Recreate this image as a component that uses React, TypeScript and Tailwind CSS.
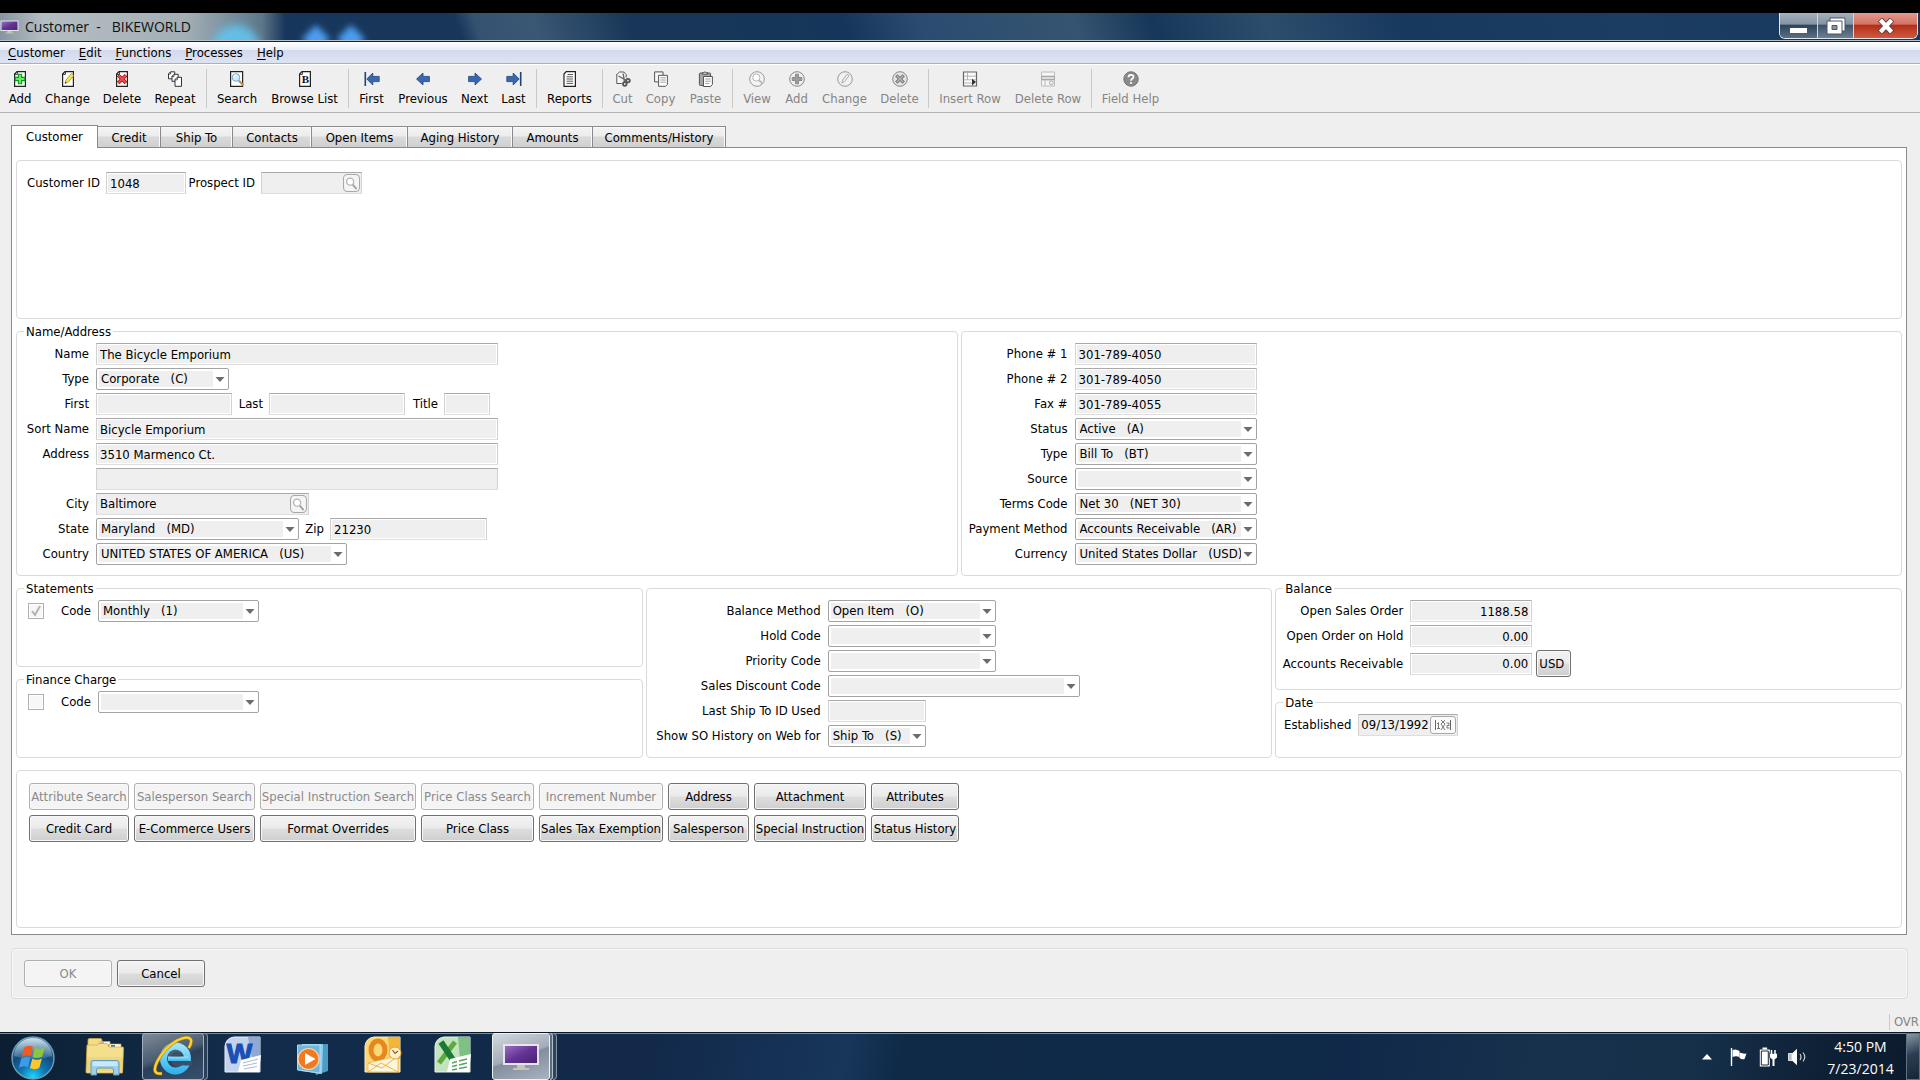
import type { ReactNode } from "react";

/* ---------- toolbar icons ---------- */

function Svg({ children, className = "size-4" }: { children: ReactNode; className?: string }) {
  return (
    <svg viewBox="0 0 16 16" className={className} fill="none" aria-hidden="true">
      {children}
    </svg>
  );
}

function Page({ stroke = "#222" }: { stroke?: string }) {
  return (
    <>
      <path d="M5 .6h8.4v14.8H2.6V3z" fill="#fff" stroke={stroke} strokeWidth="1.2" />
      <path d="M2.8 3.4H5.4V.8" stroke={stroke} strokeWidth=".9" />
    </>
  );
}

const AddIcon = () => (
  <Svg>
    <Page />
    <path d="M6.4 3.2h3.2v3.2h3.2v3.2H9.6v3.2H6.4V9.6H3.2V6.4h3.2z" fill="#5ff05f" stroke="#0a9a1a" strokeWidth="1.1" />
  </Svg>
);
const ChangeIcon = () => (
  <Svg>
    <Page />
    <path d="M5 12.5l1-3.5 5.5-6.5 2.3 1.9-5.4 6.6z" fill="#f7ea4e" stroke="#a08a20" strokeWidth=".8" />
    <path d="M5 12.5l.5-1.8 1.2 1z" fill="#333" />
  </Svg>
);
const DeleteIcon = () => (
  <Svg>
    <Page />
    <path d="M4.200 4.200l7.800 7.800M12 4.200L4.200 12" stroke="#a81010" strokeWidth="3.600" />
    <path d="M4.500 4.500l7.200 7.200M11.700 4.500l-7.200 7.200" stroke="#f25050" strokeWidth="1.800" />
  </Svg>
);
const RepeatIcon = () => (
  <Svg>
    <path d="M3.5.8h4.200v7H1.500V2.800z" fill="#fff" stroke="#333" />
    <path d="M7 3.300h4.200v7H5V5.300z" fill="#fff" stroke="#333" />
    <path d="M10.200 6.300h4.300v9H8V8.500z" fill="#fff" stroke="#333" />
    <path d="M8 8.800h2.400V6.300M5 5.600h2V3.500M1.600 3h2V1" stroke="#333" strokeWidth=".8" />
  </Svg>
);
const SearchIcon = () => (
  <Svg>
    <path d="M1.6.6h12v14.8h-12z" fill="#fff" stroke="#222" strokeWidth="1.2" />
    <path d="M9.8 9.8l4.700 4.300" stroke="#c98a4a" strokeWidth="2.200" />
    <circle cx="7" cy="6.500" r="3.800" fill="#cfeeff" stroke="#6fa6c8" />
    <path d="M4.800 5.800q.8-2 2.600-1.900" stroke="#fff" strokeWidth="1.200" />
  </Svg>
);
const BrowseIcon = () => (
  <Svg>
    <Page />
    <text x="8.300" y="12.400" fontSize="11" fontWeight="700" textAnchor="middle" fill="#111" fontFamily="Liberation Serif, serif">B</text>
  </Svg>
);
const blue = { fill: "#3a68ae", stroke: "#1e437e", strokeWidth: 0.8 };
const FirstIcon = () => (
  <Svg>
    <path d="M.5 1h1.600v14H.5z" fill="#1e437e" />
    <path d="M2.800 8l6-6v3.400h6.400v5.200H8.800V14z" {...blue} />
  </Svg>
);
const PrevIcon = () => (
  <Svg>
    <path d="M1.500 8l6.500-6v3.400h6.400v5.200H8V14z" {...blue} />
  </Svg>
);
const NextIcon = () => (
  <Svg>
    <path d="M14.500 8L8 2v3.400H1.600v5.200H8V14z" {...blue} />
  </Svg>
);
const LastIcon = () => (
  <Svg>
    <path d="M13.900 1h1.600v14h-1.600z" fill="#1e437e" />
    <path d="M13.200 8l-6-6v3.400H.8v5.200h6.400V14z" {...blue} />
  </Svg>
);
const ReportsIcon = () => (
  <Svg>
    <path d="M4.200.6h9.200v14.800H2V3z" fill="#fff" stroke="#222" strokeWidth="1.200" />
    <path d="M5.500 3.500H11M4.500 5.800H11M4.500 8H11M4.500 10.200H11M4.500 12.400H11" stroke="#444" strokeWidth=".9" />
  </Svg>
);
const CutIcon = () => (
  <Svg>
    <path d="M2.200 3.200L4.500 1h4.300l2.400 2.500v3M1.800 3v9.500h5" fill="#fafafa" stroke="#555" />
    <path d="M3.500 5l8 4.500M8.200 2.500l1.400 9" stroke="#666" strokeWidth="1.400" />
    <circle cx="13" cy="9.600" r="1.800" stroke="#555" strokeWidth="1.800" />
    <circle cx="9.800" cy="13" r="1.800" stroke="#555" strokeWidth="1.800" />
  </Svg>
);
const CopyIcon = () => (
  <Svg>
    <path d="M1.600.9h8.400v10H1.600z" fill="#f7f7f7" stroke="#555" />
    <path d="M5.600 4.300h8.800v9l-1.800 2H5.600z" fill="#fff" stroke="#555" />
    <path d="M7.300 6.800h5.500M7.300 9h5.500M7.300 11.200h5.500" stroke="#888" strokeWidth=".8" />
  </Svg>
);
const PasteIcon = () => (
  <Svg>
    <rect x="1.400" y="2" width="11.200" height="12.500" rx="1" fill="#a5a5a5" stroke="#555" />
    <path d="M4.500 3.200V1.700h1.300q1.200-1.900 2.400 0h1.300v1.500z" fill="#eee" stroke="#444" strokeWidth=".9" />
    <path d="M5.500 5.500h8.900v8l-1.800 2H5.500z" fill="#fff" stroke="#555" />
    <path d="M7.200 8h5.500M7.200 10.200h5.500M7.200 12.400h4" stroke="#888" strokeWidth=".8" />
  </Svg>
);
const ViewIcon = () => (
  <Svg>
    <circle cx="8" cy="8" r="7.300" fill="#f4f4f4" stroke="#999" />
    <circle cx="7.300" cy="6.500" r="3.600" fill="#fff" stroke="#b5b5b5" />
    <path d="M9.800 9l3.600 3.700" stroke="#bbb" strokeWidth="1.900" />
  </Svg>
);
const AddDimIcon = () => (
  <Svg>
    <circle cx="8" cy="8" r="7.300" fill="#eee" stroke="#888" />
    <path d="M6.500 3.200h3v3.300h3.300v3H9.500v3.300h-3V9.500H3.200v-3h3.300z" fill="#9d9d9d" stroke="#7c7c7c" strokeWidth=".8" />
  </Svg>
);
const ChangeDimIcon = () => (
  <Svg>
    <circle cx="8" cy="8" r="7.300" fill="#f0f0f0" stroke="#999" />
    <path d="M4.800 12l.7-2.800 4.700-6 1.900 1.500-4.700 6z" fill="#eee" stroke="#a5a5a5" strokeWidth=".9" />
  </Svg>
);
const DeleteDimIcon = () => (
  <Svg>
    <circle cx="8" cy="8" r="7.300" fill="#e4e4e4" stroke="#888" />
    <path d="M4.300 4.300l7.400 7.400M11.700 4.300l-7.400 7.400" stroke="#6f6f6f" strokeWidth="3.200" />
    <path d="M4.700 4.700l6.600 6.600M11.300 4.700l-6.600 6.600" stroke="#b5b5b5" strokeWidth="1.500" />
  </Svg>
);
const InsertRowIcon = () => (
  <Svg>
    <path d="M1.500 1h13v14h-13z" fill="#fafafa" stroke="#666" strokeWidth="1.200" />
    <path d="M2 5.200h12M2 8.800h12M5.500 1.500v7.500M2 12h8" stroke="#b5b5b5" />
    <path d="M10 7.800l4 3.300-4 3.300z" fill="#333" />
  </Svg>
);
const DeleteRowIcon = () => (
  <Svg>
    <path d="M1.500 1h13v14h-13z" fill="#f5f5f5" stroke="#bbb" />
    <path d="M2 5.200h12M2 9h12M5 9v5.500" stroke="#bbb" />
    <path d="M1.500 5.500h13v3h-13z" fill="#ddd" stroke="#999" strokeWidth=".8" />
    <circle cx="11.300" cy="11.800" r="1.900" stroke="#aaa" />
  </Svg>
);
const HelpIcon = () => (
  <Svg>
    <circle cx="8" cy="8" r="7.200" fill="#8a8a8a" stroke="#707070" />
    <path d="M5.400 6.200Q5.600 3.800 8 3.800t2.500 2Q10.500 7.200 8.900 8q-.9.500-.9 1.800" stroke="#fff" strokeWidth="1.700" />
    <circle cx="8" cy="12" r="1.100" fill="#fff" />
  </Svg>
);

type Tool = { label: string; icon: () => ReactNode; w: string; off?: boolean };
const toolGroups: Tool[][] = [
  [
    { label: "Add", icon: AddIcon, w: "w-[36px]" },
    { label: "Change", icon: ChangeIcon, w: "w-[59px]" },
    { label: "Delete", icon: DeleteIcon, w: "w-[50px]" },
    { label: "Repeat", icon: RepeatIcon, w: "w-[56px]" },
  ],
  [
    { label: "Search", icon: SearchIcon, w: "w-[54px]" },
    { label: "Browse List", icon: BrowseIcon, w: "w-[81px]" },
  ],
  [
    { label: "First", icon: FirstIcon, w: "w-[39px]" },
    { label: "Previous", icon: PrevIcon, w: "w-[64px]" },
    { label: "Next", icon: NextIcon, w: "w-[39px]" },
    { label: "Last", icon: LastIcon, w: "w-[39px]" },
  ],
  [{ label: "Reports", icon: ReportsIcon, w: "w-[59px]" }],
  [
    { label: "Cut", icon: CutIcon, w: "w-[33px]", off: true },
    { label: "Copy", icon: CopyIcon, w: "w-[43px]", off: true },
    { label: "Paste", icon: PasteIcon, w: "w-[47px]", off: true },
  ],
  [
    { label: "View", icon: ViewIcon, w: "w-[42px]", off: true },
    { label: "Add", icon: AddDimIcon, w: "w-[37px]", off: true },
    { label: "Change", icon: ChangeDimIcon, w: "w-[59px]", off: true },
    { label: "Delete", icon: DeleteDimIcon, w: "w-[51px]", off: true },
  ],
  [
    { label: "Insert Row", icon: InsertRowIcon, w: "w-[76px]", off: true },
    { label: "Delete Row", icon: DeleteRowIcon, w: "w-[80px]", off: true },
  ],
  [{ label: "Field Help", icon: HelpIcon, w: "w-[71px]", off: true }],
];

/* ---------- form parts ---------- */

function Group({ title, className = "", children }: { title?: string; className?: string; children?: ReactNode }) {
  return (
    <fieldset className={`relative min-w-0 rounded border border-[#dadada] ${className}`}>
      {title && <legend className="absolute -top-2 left-[7px] bg-white px-0.5 leading-4">{title}</legend>}
      {children}
    </fieldset>
  );
}

function Label({ id, children, className = "" }: { id: string; children: ReactNode; className?: string }) {
  return (
    <label htmlFor={id} className={`text-right whitespace-nowrap ${className}`}>
      {children}
    </label>
  );
}

const fieldBox = "h-[22px] border border-t-[#a9a9a9] border-x-[#d2d2d2] border-b-[#dedede] bg-[#efefef]";

function Field({ id, value = "", className = "" }: { id: string; value?: string; className?: string }) {
  return (
    <input
      id={id}
      type="text"
      readOnly
      value={value}
      className={`${fieldBox} px-[3px] ring-1 ring-white ring-inset outline-none ${className}`}
    />
  );
}

function LookupField({ id, value = "", name, className = "" }: { id: string; value?: string; name: string; className?: string }) {
  return (
    <div className={`${fieldBox} flex items-center pr-px ${className}`}>
      <input id={id} type="text" readOnly value={value} className="min-w-0 flex-1 px-[3px] outline-none" />
      <button type="button" aria-label={name} className="flex h-[18px] w-[17px] items-center justify-center rounded-sm border border-[#a8a8a8] bg-[#f4f4f4]">
        <svg viewBox="0 0 14 16" className="h-[15px] w-[13px]" fill="none" aria-hidden="true">
          <circle cx="5.500" cy="6" r="3.800" fill="#fff" stroke="#b4b4b4" strokeWidth="1.400" />
          <path d="M8.300 9.200l4.200 4.800" stroke="#a0a0a0" strokeWidth="2" />
        </svg>
      </button>
    </div>
  );
}

function Drop({ id, value = "", className = "" }: { id: string; value?: string; className?: string }) {
  return (
    <div className={`flex h-[22px] rounded-[2px] border border-[#a3a3a3] bg-white p-0.5 ${className}`}>
      <select id={id} className="min-w-0 flex-1 appearance-none bg-[#efefef] pl-0.5 text-clip outline-none">
        <option>{value.replace(/ {2,}/g, "\u00a0\u00a0\u00a0")}</option>
      </select>
      <svg viewBox="0 0 13 16" className="pointer-events-none h-4 w-[13px] shrink-0" aria-hidden="true">
        <path d="M2.500 6h9L7 11z" fill="#6c6c6c" />
      </svg>
    </div>
  );
}

function PushButton({ children, off, className = "" }: { children: ReactNode; off?: boolean; className?: string }) {
  return (
    <button
      type="button"
      disabled={off}
      className={`flex h-[27px] items-center justify-center rounded-[3px] border whitespace-nowrap ring-1 ring-inset ${
        off
          ? "border-[#b0b0b0] bg-[#f4f4f4] text-[#8a8a8a] ring-[#fafafa]"
          : "border-[#707070] bg-[linear-gradient(#f3f3f3_0%,#ebebeb_48%,#dddddd_52%,#cfcfcf_100%)] ring-[#f8f8f8]"
      } ${className}`}
    >
      {children}
    </button>
  );
}

const menus = ["Customer", "Edit", "Functions", "Processes", "Help"];

const tabs = [
  { label: "Credit", w: "w-[63px]" },
  { label: "Ship To", w: "w-[72px]" },
  { label: "Contacts", w: "w-[79px]" },
  { label: "Open Items", w: "w-[96px]" },
  { label: "Aging History", w: "w-[105px]" },
  { label: "Amounts", w: "w-[80px]" },
  { label: "Comments/History", w: "w-[133px]" },
];

const actions: { label: string; off?: boolean }[] = [
  { label: "Attribute Search", off: true },
  { label: "Salesperson Search", off: true },
  { label: "Special Instruction Search", off: true },
  { label: "Price Class Search", off: true },
  { label: "Increment Number", off: true },
  { label: "Address" },
  { label: "Attachment" },
  { label: "Attributes" },
  { label: "Credit Card" },
  { label: "E-Commerce Users" },
  { label: "Format Overrides" },
  { label: "Price Class" },
  { label: "Sales Tax Exemption" },
  { label: "Salesperson" },
  { label: "Special Instruction" },
  { label: "Status History" },
];

const contact: { id: string; label: string; value: string; drop?: boolean }[] = [
  { id: "phone1", label: "Phone # 1", value: "301-789-4050" },
  { id: "phone2", label: "Phone # 2", value: "301-789-4050" },
  { id: "fax", label: "Fax #", value: "301-789-4055" },
  { id: "status", label: "Status", value: "Active   (A)", drop: true },
  { id: "billtype", label: "Type", value: "Bill To   (BT)", drop: true },
  { id: "source", label: "Source", value: "", drop: true },
  { id: "terms", label: "Terms Code", value: "Net 30   (NET 30)", drop: true },
  { id: "payment", label: "Payment Method", value: "Accounts Receivable   (AR)", drop: true },
  { id: "currency", label: "Currency", value: "United States Dollar   (USD)", drop: true },
];

/* ---------- taskbar icons ---------- */

function StartOrb() {
  return (
    <svg viewBox="0 0 44 44" className="size-11" aria-hidden="true">
      <defs>
        <radialGradient id="orb" cx="50%" cy="95%" r="85%">
          <stop offset="0" stopColor="#1fd6ff" />
          <stop offset=".35" stopColor="#0f78b4" />
          <stop offset=".7" stopColor="#134a7c" />
          <stop offset="1" stopColor="#4a7898" />
        </radialGradient>
        <linearGradient id="orbShine" x2="0" y2="1">
          <stop offset="0" stopColor="#dcecf4" stopOpacity=".9" />
          <stop offset="1" stopColor="#8fb6cc" stopOpacity=".25" />
        </linearGradient>
      </defs>
      <circle cx="22" cy="22" r="21" fill="url(#orb)" stroke="#6f9db8" strokeWidth="1.400" />
      <path d="M3 20a19 18 0 0138 0q-19 6-38 0z" fill="url(#orbShine)" />
      <path d="M13 11.500q4.500-3 9-.6l-2.200 9.300q-4.500-2.200-9 .6z" fill="#ee5a24" />
      <path d="M23.800 11.700q4.700 2.300 10-.5l-2.500 9.300q-5 2.600-9.700.4z" fill="#8cc63e" />
      <path d="M10.200 22.500q4.500-2.800 9-.4L17 31.300q-4.500-2.300-9 .5z" fill="#3f9be8" />
      <path d="M21.200 22.800q4.700 2.300 9.700-.4l-2.500 9.300q-5 2.800-9.500.4z" fill="#fcc62d" />
    </svg>
  );
}

function FolderIcon() {
  return (
    <svg viewBox="0 0 40 40" className="size-10" aria-hidden="true">
      <path d="M3 3q0-1.500 1.500-1.500h11q1.500 0 1.500 2V9H3z" fill="#f3dc86" stroke="#c9a94c" strokeWidth=".8" />
      <path d="M14 4.500h11V8H14zM24 7h12v4H24z" fill="#fffbe8" stroke="#c9a94c" strokeWidth=".6" />
      <path d="M15 5.500h4v2h-4z" fill="#d9482e" />
      <path d="M26 8h4v2h-4z" fill="#3a7ec2" />
      <path d="M2 8h10l2-1.500h8L24 10h13.500q1 0 1 1.200L37.500 36H2q-1 0-1-1z" fill="#f4df8d" stroke="#cfb055" strokeWidth=".8" />
      <path d="M2 20h36v14H2z" fill="#e9cc66" opacity=".45" />
      <path d="M6 25.500q0-2 2-2h24q2 0 2 2V38h-5.500v-5q0-2-2-2h-13q-2 0-2 2v5H6z" fill="#9fcfe8" stroke="#5f9cc4" />
      <path d="M7.500 25.500q0-1 1-1h23q1 0 1 1v3.500h-25z" fill="#d5edf8" opacity=".8" />
    </svg>
  );
}

function BrowserIcon() {
  return (
    <svg viewBox="0 0 40 42" className="h-[42px] w-10" fill="none" aria-hidden="true">
      <defs>
        <linearGradient id="eFill" x2="0" y2="1">
          <stop offset="0" stopColor="#9be4fb" />
          <stop offset="1" stopColor="#34b4ee" />
        </linearGradient>
      </defs>
      <ellipse cx="22.500" cy="22.500" rx="12" ry="12.500" stroke="url(#eFill)" strokeWidth="7" />
      <path d="M15 20.500h20.500v4.500H15z" fill="url(#eFill)" />
      <path d="M26 25h13v4.500h-9z" fill="#3a5068" />
      <path d="M18.500 20.300q.8-4.300 4.300-4.300t4.300 4.300zM18.500 25h8l3.500 4q-3 2-6 1.500-4.500-.7-5.500-5.500z" fill="#3a5068" />
      <path d="M9 37.500Q-2 39 4 26 11 12 24 4.500 36-1 38 4q.8 3-2.200 8" stroke="#b88710" strokeWidth="3.400" />
      <path d="M9 37.500Q-2 39 4 26 11 12 24 4.500 36-1 38 4q.8 3-2.200 8" stroke="#fbd231" strokeWidth="2.200" />
    </svg>
  );
}

function WordIcon() {
  return (
    <svg viewBox="0 0 38 38" className="size-[38px]" fill="none" aria-hidden="true">
      <path d="M10 1h26v35H1V10Q2 2 10 1z" fill="#c3d3ee" stroke="#eaf1fb" />
      <path d="M24 1h12v22H28z" fill="#8fa8d6" />
      <text x="15.500" y="27" fontSize="27" fontWeight="700" textAnchor="middle" fill="#1a50b4" stroke="#1a50b4" strokeWidth="1.200" fontFamily="Liberation Sans, sans-serif">W</text>
      <path d="M17 24l20-5-2 17H14z" fill="#fff" />
      <path d="M19 27l15-4M19 30l14-3M20 33l13-2.500" stroke="#aab9d8" />
    </svg>
  );
}

function MediaIcon() {
  return (
    <svg viewBox="0 0 34 34" className="size-[34px]" aria-hidden="true">
      <path d="M9 3l23-1v27L20 33z" fill="#4b9cc7" />
      <path d="M6 2h21l-1 30L5 29z" fill="#8fd0ee" />
      <path d="M1.500 3H24v28L1.500 28z" fill="#6fb8dc" stroke="#a9dcf2" />
      <circle cx="12.500" cy="17" r="10.500" fill="#f07a22" stroke="#ffd2a8" strokeWidth="1.200" />
      <path d="M9 11l10.500 6L9 23z" fill="#fff" />
    </svg>
  );
}

function MailIcon() {
  return (
    <svg viewBox="0 0 38 38" className="size-[38px]" fill="none" aria-hidden="true">
      <path d="M10 1h26v35H1V10Q2 2 10 1z" fill="#fbd877" stroke="#fff0c0" />
      <path d="M24 1h12v22H26z" fill="#f4b63a" />
      <ellipse cx="14" cy="14" rx="7" ry="9" stroke="#e8871c" strokeWidth="5" />
      <path d="M4 27l30-7v16H4z" fill="#fdf6de" stroke="#eab54a" strokeWidth=".8" />
      <path d="M4 36l13-9 17 9M4 27l14 5 16-12" stroke="#eab54a" />
      <circle cx="31" cy="17" r="6" fill="#fdf1cf" stroke="#e8a22e" />
      <path d="M28.500 14l2.500 3.500 3-2.500" stroke="#8a5a10" strokeWidth="1.200" />
    </svg>
  );
}

function SheetIcon() {
  return (
    <svg viewBox="0 0 38 38" className="size-[38px]" fill="none" aria-hidden="true">
      <path d="M10 1h26v35H1V10Q2 2 10 1z" fill="#c2e3bd" stroke="#e9f6e6" />
      <path d="M24 1h12v22H26z" fill="#7fc184" />
      <path d="M5 27L21 6" stroke="#5cab3c" strokeWidth="5" />
      <path d="M7 6l14 21" stroke="#1c7a36" strokeWidth="6" />
      <path d="M16 23l21-5-2 18H13z" fill="#fff" />
      <path d="M18 27l5-1.500M25 25l8-2M18 30.500l5-1.200M25 29l8-2M18 34l5-1M25 32.500l8-1.500" stroke="#5aa563" strokeWidth="1.500" />
    </svg>
  );
}

function MonitorIcon({ className }: { className: string }) {
  return (
    <svg viewBox="0 0 38 28" className={className} aria-hidden="true">
      <defs>
        <linearGradient id="screen" x2="1" y2="1">
          <stop offset="0" stopColor="#9a6ec0" />
          <stop offset=".5" stopColor="#643494" />
          <stop offset="1" stopColor="#4a2372" />
        </linearGradient>
      </defs>
      <path d="M15 22h8v3h4v2H11v-2h4z" fill="#c9c5b6" />
      <path d="M1 1h36v21H1z" fill="#e5e5ea" />
      <path d="M3 3h32v17H3z" fill="url(#screen)" />
    </svg>
  );
}

export default function App() {
  return (
    <div className="flex min-h-screen flex-col bg-[#efefef] font-['DejaVu_Sans_Condensed','DejaVu_Sans',sans-serif] text-[13px] leading-4 text-black">
      <div className="h-[13px] bg-black" />

      <header className="relative flex h-[29px] items-center overflow-hidden border-b border-[#0f2438] bg-[linear-gradient(70deg,#17375e_0%,#17365a_24%,#355371_25%,#3a5874_28%,#183658_33%,#15365a_44%,#2b4c70_48%,#355471_56%,#17375a_60%,#2d4d6c_66%,#17395e_73%,#1c3d62_85%,#17375c_100%)]">
        <div className="absolute inset-y-0 left-0 w-[285px] bg-[linear-gradient(90deg,#8595a0_0%,#b4bdc2_15%,#a4afb5_65%,#6d8799_85%,#5d7588_92%,transparent_100%)]" />
        <div className="absolute top-3 left-[212px] h-6 w-[48px] rounded-t-full bg-[#62c4ee] opacity-90 blur-[4px]" />
        <div className="absolute top-4 left-[306px] h-5 w-5 rotate-45 bg-[#4b9cf0] blur-[3px]" />
        <div className="absolute top-4 left-[341px] h-5 w-5 rotate-45 bg-[#4b9cf0] blur-[3px]" />
        <div className="absolute inset-x-0 bottom-0 h-px bg-[#b4c0cb]" />
        <MonitorIcon className="relative h-[14px] w-[19px]" />
        <h1 className="relative ml-[6px] font-['Open_Sans','Noto_Sans',sans-serif] text-sm whitespace-pre text-[#0c1013]">{"Customer  -   BIKEWORLD"}</h1>
        <div className="relative mr-[2px] ml-auto flex h-[26px] self-start overflow-hidden rounded-b-md border border-t-0 border-[#dfe6ec]">
          <button type="button" aria-label="Minimize" className="flex w-[38px] items-end justify-center border-r border-[#cdd6de] bg-[linear-gradient(#a5b2bd_0%,#8494a3_45%,#2c4258_48%,#5b7084_100%)] pb-[5px]">
            <span className="h-[5px] w-[17px] bg-white" />
          </button>
          <button type="button" aria-label="Restore" className="flex w-[36px] items-center justify-center border-r border-[#cdd6de] bg-[linear-gradient(#a5b2bd_0%,#8494a3_45%,#3c5268_48%,#6b8094_100%)]">
            <svg viewBox="0 0 20 18" className="h-[18px] w-5" aria-hidden="true">
              <path d="M4 1h15v13H4z" fill="#fff" stroke="#4a5866" />
              <path d="M1 4h15v13H1z" fill="#fff" stroke="#4a5866" />
              <path d="M6 8.500h5v4H6z" fill="#8494a3" stroke="#4a5866" />
            </svg>
          </button>
          <button type="button" aria-label="Close" className="flex w-[63px] items-center justify-center bg-[linear-gradient(#e39a8e_0%,#d47263_45%,#b22d18_48%,#cf5a3f_100%)]">
            <svg viewBox="0 0 18 16" className="h-4 w-[18px]" fill="none" aria-hidden="true">
              <path d="M3 1.500L15 14.500M15 1.500L3 14.500" stroke="#5a3a3a" strokeWidth="6" />
              <path d="M3.400 2L14.600 14M14.600 2L3.400 14" stroke="#fff" strokeWidth="4.200" />
            </svg>
          </button>
        </div>
      </header>

      <nav className="flex h-[22px] items-center gap-[14px] border-b border-[#a7b0c8] bg-[linear-gradient(#ffffff_0%,#e9eef7_36%,#d3daec_38%,#dee3f3_100%)] pl-2">
        {menus.map((m) => (
          <button key={m} type="button">
            <span className="underline underline-offset-2">{m[0]}</span>
            {m.slice(1)}
          </button>
        ))}
      </nav>

      <div role="toolbar" aria-label="Record tools" className="flex h-[49px] border-t border-b border-t-white border-b-[#b3b3b3] pl-0.5">
        {toolGroups.map((g, i) => (
          <div key={i} className="flex">
            {i > 0 && <span className="mx-[3px] mt-1 h-[39px] w-px bg-[#c9c9c9]" />}
            {g.map((t) => (
              <button
                key={t.label}
                type="button"
                disabled={t.off}
                className={`flex flex-col items-center gap-1 pt-1.5 whitespace-nowrap ${t.w} ${t.off ? "text-[#858585]" : "text-black"}`}
              >
                <t.icon />
                <span>{t.label}</span>
              </button>
            ))}
          </div>
        ))}
      </div>

      <main className="mr-[13px] ml-[11px] flex flex-1 flex-col pt-3">
        <div role="tablist" className="flex h-[22px] items-end">
          <button type="button" role="tab" aria-selected="true" className="relative z-10 -mb-px h-[23px] w-[87px] border border-b-0 border-[#8a8a8e] bg-white">
            Customer
          </button>
          {tabs.map((t) => (
            <button
              key={t.label}
              type="button"
              role="tab"
              aria-selected="false"
              className={`h-[21px] border-t border-r border-[#8a8a8e] bg-[linear-gradient(#f4f4f4_0%,#ececec_45%,#dadada_50%,#d0d0d0_100%)] pt-0.5 whitespace-nowrap shadow-[inset_-1px_1px_0_#fafafa] ${t.w}`}
            >
              {t.label}
            </button>
          ))}
        </div>

        <section className="flex flex-1 flex-col gap-3 border border-[#8a8a8e] bg-white px-1 pt-3 pb-1.5">
          <Group className="min-h-[159px] pt-[11px] pl-2.5">
            <div className="flex items-center">
              <Label id="cust" className="w-[72px]">Customer ID</Label>
              <Field id="cust" value="1048" className="ml-[7px] w-[80px]" />
              <Label id="prospect" className="ml-[2px] w-[67px]">Prospect ID</Label>
              <LookupField id="prospect" name="Find prospect" className="ml-[6px] w-[101px]" />
            </div>
          </Group>

          <div className="grid grid-cols-2 gap-[3px]">
            <Group title="Name/Address" className="pt-[11px] pb-2.5">
              <div className="grid grid-cols-[72px_auto] items-center justify-start gap-x-[7px] gap-y-[3px]">
                <Label id="name">Name</Label>
                <Field id="name" value="The Bicycle Emporium" className="w-[402px]" />
                <Label id="type">Type</Label>
                <Drop id="type" value="Corporate   (C)" className="w-[133px]" />
                <Label id="first">First</Label>
                <div className="flex items-center">
                  <Field id="first" className="w-[136px]" />
                  <Label id="last" className="w-[31px]">Last</Label>
                  <Field id="last" className="ml-1.5 w-[136px]" />
                  <Label id="title" className="w-[33px]">Title</Label>
                  <Field id="title" className="ml-1.5 w-[46px]" />
                </div>
                <Label id="sort">Sort Name</Label>
                <Field id="sort" value="Bicycle Emporium" className="w-[402px]" />
                <Label id="addr1">Address</Label>
                <Field id="addr1" value="3510 Marmenco Ct." className="w-[402px]" />
                <span />
                <input type="text" readOnly aria-label="Address line 2" className={`${fieldBox} w-[402px] outline-none`} />
                <Label id="city">City</Label>
                <LookupField id="city" value="Baltimore" name="Find city" className="w-[213px]" />
                <Label id="state">State</Label>
                <div className="flex items-center">
                  <Drop id="state" value="Maryland   (MD)" className="w-[203px]" />
                  <Label id="zip" className="w-[25px]">Zip</Label>
                  <Field id="zip" value="21230" className="ml-1.5 w-[157px]" />
                </div>
                <Label id="country">Country</Label>
                <Drop id="country" value="UNITED STATES OF AMERICA   (US)" className="w-[251px]" />
              </div>
            </Group>

            <Group className="pt-[11px] pb-2.5">
              <div className="grid grid-cols-[106px_182px] items-center gap-x-[7px] gap-y-[3px]">
                {contact.map((c) => (
                  <div key={c.id} className="contents">
                    <Label id={c.id}>{c.label}</Label>
                    {c.drop ? <Drop id={c.id} value={c.value} /> : <Field id={c.id} value={c.value} />}
                  </div>
                ))}
              </div>
            </Group>
          </div>

          <div className="grid grid-cols-3 gap-[3px]">
            <div className="flex flex-col gap-3">
              <Group title="Statements" className="flex-1 pt-[11px] pl-[11px]">
                <div className="flex items-center">
                  <input type="checkbox" defaultChecked disabled aria-label="Send statements" className="size-4 appearance-none border border-[#b0b0b0] bg-[#f7f7f7] shadow-[inset_0_0_0_1px_#fff]" />
                  <svg viewBox="0 0 16 16" className="pointer-events-none -ml-4 size-4" fill="none" aria-hidden="true">
                    <path d="M4 8l3 4 5-9" stroke="#b4b4b4" strokeWidth="2" />
                  </svg>
                  <Label id="stmt" className="ml-[17px] w-[30px]">Code</Label>
                  <Drop id="stmt" value="Monthly   (1)" className="ml-[7px] w-[161px]" />
                </div>
              </Group>
              <Group title="Finance Charge" className="flex-1 pt-[11px] pl-[11px]">
                <div className="flex items-center">
                  <input type="checkbox" disabled aria-label="Apply finance charge" className="size-4 appearance-none border border-[#b0b0b0] bg-[#f7f7f7] shadow-[inset_0_0_0_1px_#fff]" />
                  <Label id="fin" className="ml-[17px] w-[30px]">Code</Label>
                  <Drop id="fin" className="ml-[7px] w-[161px]" />
                </div>
              </Group>
            </div>

            <Group className="pt-[11px] pb-2.5">
              <div className="grid grid-cols-[174px_auto] items-center justify-start gap-x-[7px] gap-y-[3px]">
                <Label id="balm">Balance Method</Label>
                <Drop id="balm" value="Open Item   (O)" className="w-[168px]" />
                <Label id="hold">Hold Code</Label>
                <Drop id="hold" className="w-[168px]" />
                <Label id="prio">Priority Code</Label>
                <Drop id="prio" className="w-[168px]" />
                <Label id="disc">Sales Discount Code</Label>
                <Drop id="disc" className="w-[252px]" />
                <Label id="lastship">Last Ship To ID Used</Label>
                <Field id="lastship" className="w-[98px]" />
                <Label id="sohist">Show SO History on Web for</Label>
                <Drop id="sohist" value="Ship To   (S)" className="w-[98px]" />
              </div>
            </Group>

            <div className="flex flex-col gap-3">
              <Group title="Balance" className="pt-[11px] pb-3">
                <div className="grid grid-cols-[127px_auto] items-center justify-start gap-x-[7px] gap-y-[3px]">
                  <Label id="oso">Open Sales Order</Label>
                  <Field id="oso" value="1188.58" className="w-[122px] text-right" />
                  <Label id="ooh">Open Order on Hold</Label>
                  <Field id="ooh" value="0.00" className="w-[122px] text-right" />
                  <Label id="ar">Accounts Receivable</Label>
                  <div className="flex items-center gap-1">
                    <Field id="ar" value="0.00" className="w-[122px] text-right" />
                    <PushButton className="w-[35px] pr-1">USD</PushButton>
                  </div>
                </div>
              </Group>
              <Group title="Date" className="flex-1 pt-[11px]">
                <div className="flex items-center">
                  <Label id="est" className="w-[75px]">Established</Label>
                  <div className={`${fieldBox} ml-[7px] flex w-[100px] items-center pr-px`}>
                    <input id="est" type="text" readOnly value="09/13/1992" className="min-w-0 flex-1 pl-0.5 outline-none" />
                    <button type="button" aria-label="Choose date" className="flex h-[18px] w-[26px] items-center justify-center rounded-[3px] border border-[#a8a8a8] bg-[#fafafa]">
                      <svg viewBox="0 0 18 12" className="h-3 w-[18px]" fill="none" aria-hidden="true">
                        <path d="M1.500 1v10M16.500 1v10" stroke="#666" />
                        <path d="M7 1l4 4-4 6M11 1L7 5l4 6" stroke="#777" />
                        <path d="M3 5l1.500-1.500V9M3 9.500h3M12.500 4H15v2.500h-2V9h2.500" stroke="#777" />
                      </svg>
                    </button>
                  </div>
                </div>
              </Group>
            </div>
          </div>

          <Group className="flex-1 pt-3 pl-3">
            <div className="grid grid-cols-[100px_121px_156px_113px_124px_81px_112px_88px] gap-[5px]">
              {actions.map((a) => (
                <PushButton key={a.label} off={a.off}>
                  {a.label}
                </PushButton>
              ))}
            </div>
          </Group>
        </section>
      </main>

      <div className="mt-[13px] mr-3 ml-[11px] flex gap-[5px] rounded border border-[#dadcdc] py-[11px] pl-3 shadow-[inset_0_0_0_1px_#f8f8f8]">
        <PushButton off className="w-[88px]">OK</PushButton>
        <PushButton className="w-[88px]">Cancel</PushButton>
      </div>

      <div className="flex h-[33px] items-end justify-end pb-[2px] text-[#858585]">
        <span className="border-l border-[#c8c8c8] pr-px pl-1">OVR</span>
      </div>

      <footer className="flex h-12 items-stretch border-t border-[#0a1826] bg-[linear-gradient(100deg,#0b1e32_0%,#0d2339_3%,#122c4a_12%,#12294a_34%,#17365a_44%,#0f2a47_47%,#10294a_70%,#17304c_80%,#16304a_88%,#0e2035_95%,#0c1a2c_100%)] pl-[11px] font-['Open_Sans','Noto_Sans',sans-serif] text-white shadow-[inset_0_1px_0_#7d8b99]">
        <button type="button" aria-label="Start" className="mr-[14px] flex w-11 items-center pt-0.5">
          <StartOrb />
        </button>
        <button type="button" aria-label="Explorer" className="flex w-[72px] items-center justify-center"><FolderIcon /></button>
        <div className="flex w-[67px] pl-px">
          <button type="button" aria-label="Browser" className="flex w-[62px] items-center justify-center rounded-[3px] border border-[#a4b1bd] bg-[linear-gradient(160deg,#7e8a98,#4a5d72_45%,#2b4058_55%,#35506e)]"><BrowserIcon /></button>
          <span className="w-1 rounded-r border border-l-0 border-[#7f90a0] bg-[#2b4058]" />
        </div>
        <button type="button" aria-label="Word processor" className="flex w-[70px] items-center justify-center pb-1"><WordIcon /></button>
        <button type="button" aria-label="Media player" className="flex w-[70px] items-center justify-center pt-1"><MediaIcon /></button>
        <button type="button" aria-label="Mail" className="flex w-[70px] items-center justify-center pb-1"><MailIcon /></button>
        <button type="button" aria-label="Spreadsheet" className="flex w-[70px] items-center justify-center pb-1"><SheetIcon /></button>
        <div className="flex pl-1">
          <button type="button" aria-label="Customer window" className="flex w-[58px] items-center justify-center rounded-[3px] border border-[#eef1f4] bg-[linear-gradient(160deg,#d3d8de,#a4acb8_48%,#828e9e_52%,#a9b3c0)]"><MonitorIcon className="h-7 w-[38px]" /></button>
          <span className="w-[3px] rounded-r border border-l-0 border-[#b5bfc9] bg-[#5b6c7e]" />
          <span className="w-1 rounded-r border border-l-0 border-[#8493a2] bg-[#2f445a]" />
        </div>

        <div className="ml-auto flex items-center">
          <button type="button" aria-label="Show hidden icons" className="mr-[18px]">
            <svg viewBox="0 0 10 6" className="h-1.5 w-2.5" aria-hidden="true"><path d="M5 0l5 5.500H0z" fill="#fff" /></svg>
          </button>
          <button type="button" aria-label="Action center" className="mr-[11px]">
            <svg viewBox="0 0 18 18" className="size-[18px]" fill="none" aria-hidden="true">
              <path d="M1.500 0v18" stroke="#fff" strokeWidth="1.400" />
              <path d="M2.500 2Q6 .5 9.500 3v6Q6 7.500 2.500 9z" fill="#fff" />
              <path d="M9.500 4.500q3.500 1.500 7 1L14.500 11q-2.500 1-5-1z" fill="#fff" />
            </svg>
          </button>
          <button type="button" aria-label="Power" className="mr-[11px]">
            <svg viewBox="0 0 18 20" className="h-5 w-[18px]" fill="none" aria-hidden="true">
              <path d="M.8 2.500h10v17h-10z" fill="#fff" />
              <path d="M2.300 4h7v14h-7z" fill="#fff" stroke="#16283a" />
              <path d="M3.500.5h4.600v2H3.500z" fill="#fff" />
              <path d="M10.300 5.500h8v5.500l-2.300 2v6h-3v-6l-2.700-2z" fill="#16283a" />
              <path d="M12.500 3v4M16 3v4" stroke="#fff" strokeWidth="1.500" />
              <path d="M11 6.800h7v3.700l-2.500 2V19h-2v-6.500l-2.500-2z" fill="#fff" />
            </svg>
          </button>
          <button type="button" aria-label="Volume" className="mr-[19px]">
            <svg viewBox="0 0 19 18" className="h-[18px] w-[19px]" fill="none" aria-hidden="true">
              <path d="M.5 5.500h3.500v7H.5z" fill="#b4bcc4" stroke="#fff" strokeWidth=".8" />
              <path d="M4 5.500L9 .8v16.400L4 12.500z" fill="#fff" />
              <path d="M12 6q2 3 0 6M15 4.500q3.500 4.500 0 9" stroke="#c8d0d8" strokeWidth="1.200" />
            </svg>
          </button>
          <div className="mr-[11px] flex h-full w-[69px] flex-col items-center pt-[3px] text-sm leading-[22px]">
            <span>4:50 PM</span>
            <span>7/23/2014</span>
          </div>
          <button type="button" aria-label="Show desktop" className="h-full w-[14px] border border-[#5d7284] bg-[linear-gradient(160deg,#8b98a5,#2c3f52_45%,#152536)]" />
        </div>
      </footer>
    </div>
  );
}
